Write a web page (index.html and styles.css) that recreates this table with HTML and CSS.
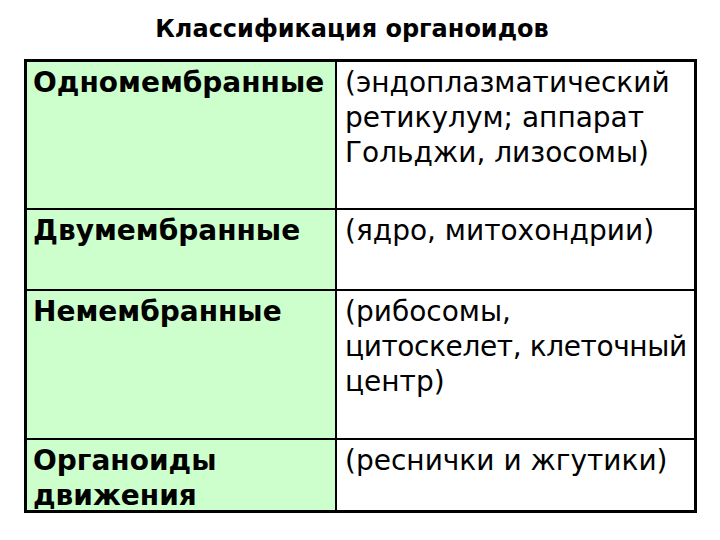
FILE: index.html
```html
<!DOCTYPE html>
<html lang="ru">
<head>
<meta charset="utf-8">
<title>Классификация органоидов</title>
<link rel="stylesheet" href="styles.css">
</head>
<body>
<div class="page">
  <h1 class="title">Классификация органоидов</h1>
  <div class="grid">
    <div class="cell name r1">Одномембранные</div>
    <div class="cell desc r1">(эндоплазматический<br>ретикулум; аппарат<br>Гольджи, лизосомы)</div>
    <div class="cell name r2">Двумембранные</div>
    <div class="cell desc r2">(ядро, митохондрии)</div>
    <div class="cell name r3">Немембранные</div>
    <div class="cell desc r3">(рибосомы,<br><span class="tight">цитоскелет, клеточный</span><br>центр)</div>
    <div class="cell name r4 last">Органоиды<br>движения</div>
    <div class="cell desc r4 last">(реснички и жгутики)</div>
  </div>
</div>
</body>
</html>
```
FILE: styles.css
```css
html, body {
  margin: 0;
  padding: 0;
  background: #ffffff;
}
.page {
  width: 720px;
  height: 540px;
  font-family: "DejaVu Sans", Verdana, sans-serif;
  color: #000;
}
.title {
  margin: 0;
  height: 59px;
  box-sizing: border-box;
  padding: 15px 16px 0 0;
  font-size: 24px;
  font-weight: bold;
  line-height: 28px;
  text-align: center;
}
.grid {
  margin-left: 24px;
  width: 673px;
  box-sizing: border-box;
  border: 3px solid #000;
  display: grid;
  grid-template-columns: 310px 1fr;
  grid-template-rows: 148px 81px 149px 70px;
}
.cell {
  box-sizing: border-box;
  border-bottom: 2px solid #000;
  font-size: 28px;
  line-height: 35px;
  padding-top: 3px;
  white-space: nowrap;
}
.cell.last {
  border-bottom: none;
}
.name {
  background: #ccffcc;
  font-weight: bold;
  padding-left: 6px;
  border-right: 2px solid #000;
}
.desc {
  background: #fff;
  padding-left: 8px;
}
.tight {
  letter-spacing: -0.4px;
}
```
